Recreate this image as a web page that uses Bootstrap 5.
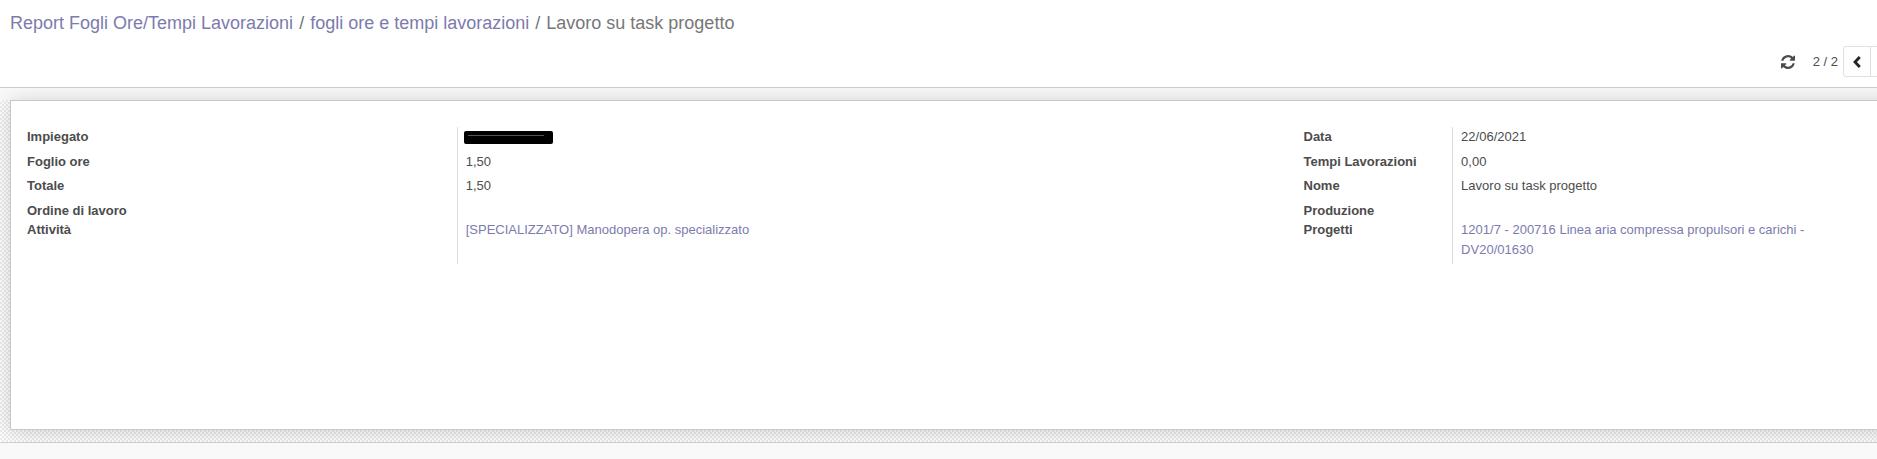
<!DOCTYPE html>
<html lang="it">
<head>
<meta charset="utf-8">
<meta name="viewport" content="width=device-width, initial-scale=1">
<title>Lavoro su task progetto</title>
<link href="https://cdn.jsdelivr.net/npm/bootstrap@5.3.0/dist/css/bootstrap.min.css" rel="stylesheet">
<style>
body { font-family: "Liberation Sans", Arial, sans-serif; font-size: 13px; color: #4c4c4c; background: #f9f9f9; }
a { color: #7c7bad; text-decoration: none; }
.control-panel { background: #fff; border-bottom: 1px solid #cbcbcf; z-index: 2; padding: 10px 0; }
.breadcrumb { font-size: 18px; line-height: 26px; padding-left: 10px; --bs-breadcrumb-divider-color: #6c757d; --bs-breadcrumb-item-padding-x: 6px; --bs-breadcrumb-item-active-color: #777; }
.pager { height: 31px; margin: 10px -21px 0 0; }
.pager .btn-group .btn { --bs-btn-border-color: #dee2e6; --bs-btn-color: #212529; --bs-btn-border-radius: 3px; width: 28px; }
.reload { color: #4c4c4c; margin-right: 18px; }
.pager-count { margin-right: 5px; }
.sheet-bg { padding: 0 0 12px 10px; border-bottom: 1px solid #d2d2d6; background: repeating-conic-gradient(#ececec 0 25%, #fff 0 50%) 0 0 / 4px 4px; background-clip: padding-box; }
.sheet { background: #fff; border: 1px solid #c8c8d3; border-right: 0; min-height: 330px; padding: 26px 20px 16px 16px; margin-right: -20px; box-shadow: 0 2px 20px rgba(0, 0, 0, .18); }
.groups { display: grid; grid-template-columns: 69fr 31fr; }
.fields { table-layout: fixed; width: 100%; align-self: start; }
.fields th, .fields td { padding: 0 0 5px; vertical-align: top; line-height: 1.5; }
.fields td { padding-left: 8px; border-left: 1px solid #ddd; }
.fields .unset > * { padding-bottom: 0; }
.label-wide { width: 33.7%; }
.label-narrow { width: 26%; }
.redacted { display: block; width: 89px; height: 13px; margin: 4px 0 0 -2px; background: linear-gradient(#555, #555) 4px 4px / 76px 1px no-repeat #000; border-radius: 2px; }
</style>
</head>
<body class="overflow-hidden">
<header class="control-panel position-relative">
  <nav aria-label="breadcrumb">
    <ol class="breadcrumb mb-0">
      <li class="breadcrumb-item"><a href="#">Report Fogli Ore/Tempi Lavorazioni</a></li>
      <li class="breadcrumb-item"><a href="#">fogli ore e tempi lavorazioni</a></li>
      <li class="breadcrumb-item active" aria-current="page">Lavoro su task progetto</li>
    </ol>
  </nav>
  <div class="pager d-flex justify-content-end align-items-center">
    <button class="reload btn p-0 border-0 lh-1" type="button" aria-label="Ricarica">
      <svg class="d-block" width="14" height="14" viewBox="0 0 1536 1536" fill="currentColor" aria-hidden="true"><path d="M1511 928q0 5-1 7-64 268-268 434.500t-478 166.500q-146 0-282.500-55t-243.500-157l-129 129q-19 19-45 19t-45-19-19-45v-448q0-26 19-45t45-19h448q26 0 45 19t19 45-19 45l-137 137q71 66 161 102t187 36q134 0 250-65t186-179q11-17 53-117 8-23 30-23h192q13 0 22.500 9.500t9.500 22.500zm25-800v448q0 26-19 45t-45 19h-448q-26 0-45-19t-19-45 19-45l138-138q-148-137-349-137-134 0-250 65t-186 179q-11 17-53 117-8 23-30 23h-199q-13 0-22.500-9.500t-9.500-22.500v-7q65-268 270-434.500t480-166.500q146 0 284 55.500t245 156.500l130-129q19-19 45-19t45 19 19 45z"/></svg>
    </button>
    <span class="pager-count">2 / 2</span>
    <div class="btn-group h-100">
      <button class="btn p-0 lh-1" type="button" aria-label="Precedente"><svg width="8" height="12" viewBox="0 0 8 12" fill="none" stroke="currentColor" stroke-width="2.800" aria-hidden="true"><path d="M6.800 1 2 6l4.800 5"/></svg></button>
      <button class="btn p-0 lh-1" type="button" aria-label="Successivo"><svg width="8" height="12" viewBox="0 0 8 12" fill="none" stroke="currentColor" stroke-width="2.800" aria-hidden="true"><path d="M1.200 1 6 6l-4.800 5"/></svg></button>
    </div>
  </div>
</header>
<main class="pt-2">
  <div class="sheet-bg mt-1">
    <section class="sheet position-relative">
      <div class="groups">
        <table class="fields">
          <colgroup><col class="label-wide"><col></colgroup>
          <tr><th scope="row">Impiegato</th><td><span class="redacted"></span></td></tr>
          <tr><th scope="row">Foglio ore</th><td>1,50</td></tr>
          <tr><th scope="row">Totale</th><td>1,50</td></tr>
          <tr class="unset"><th scope="row">Ordine di lavoro</th><td></td></tr>
          <tr><th scope="row">Attività</th><td><a href="#">[SPECIALIZZATO] Manodopera op. specializzato</a><br><br></td></tr>
        </table>
        <table class="fields">
          <colgroup><col class="label-narrow"><col></colgroup>
          <tr><th scope="row">Data</th><td>22/06/2021</td></tr>
          <tr><th scope="row">Tempi Lavorazioni</th><td>0,00</td></tr>
          <tr><th scope="row">Nome</th><td>Lavoro su task progetto</td></tr>
          <tr class="unset"><th scope="row">Produzione</th><td></td></tr>
          <tr><th scope="row">Progetti</th><td><a href="#">1201/7 - 200716 Linea aria compressa propulsori e carichi - DV20/01630</a></td></tr>
        </table>
      </div>
    </section>
  </div>
</main>
<script src="https://cdn.jsdelivr.net/npm/bootstrap@5.3.0/dist/js/bootstrap.bundle.min.js"></script>
</body>
</html>
